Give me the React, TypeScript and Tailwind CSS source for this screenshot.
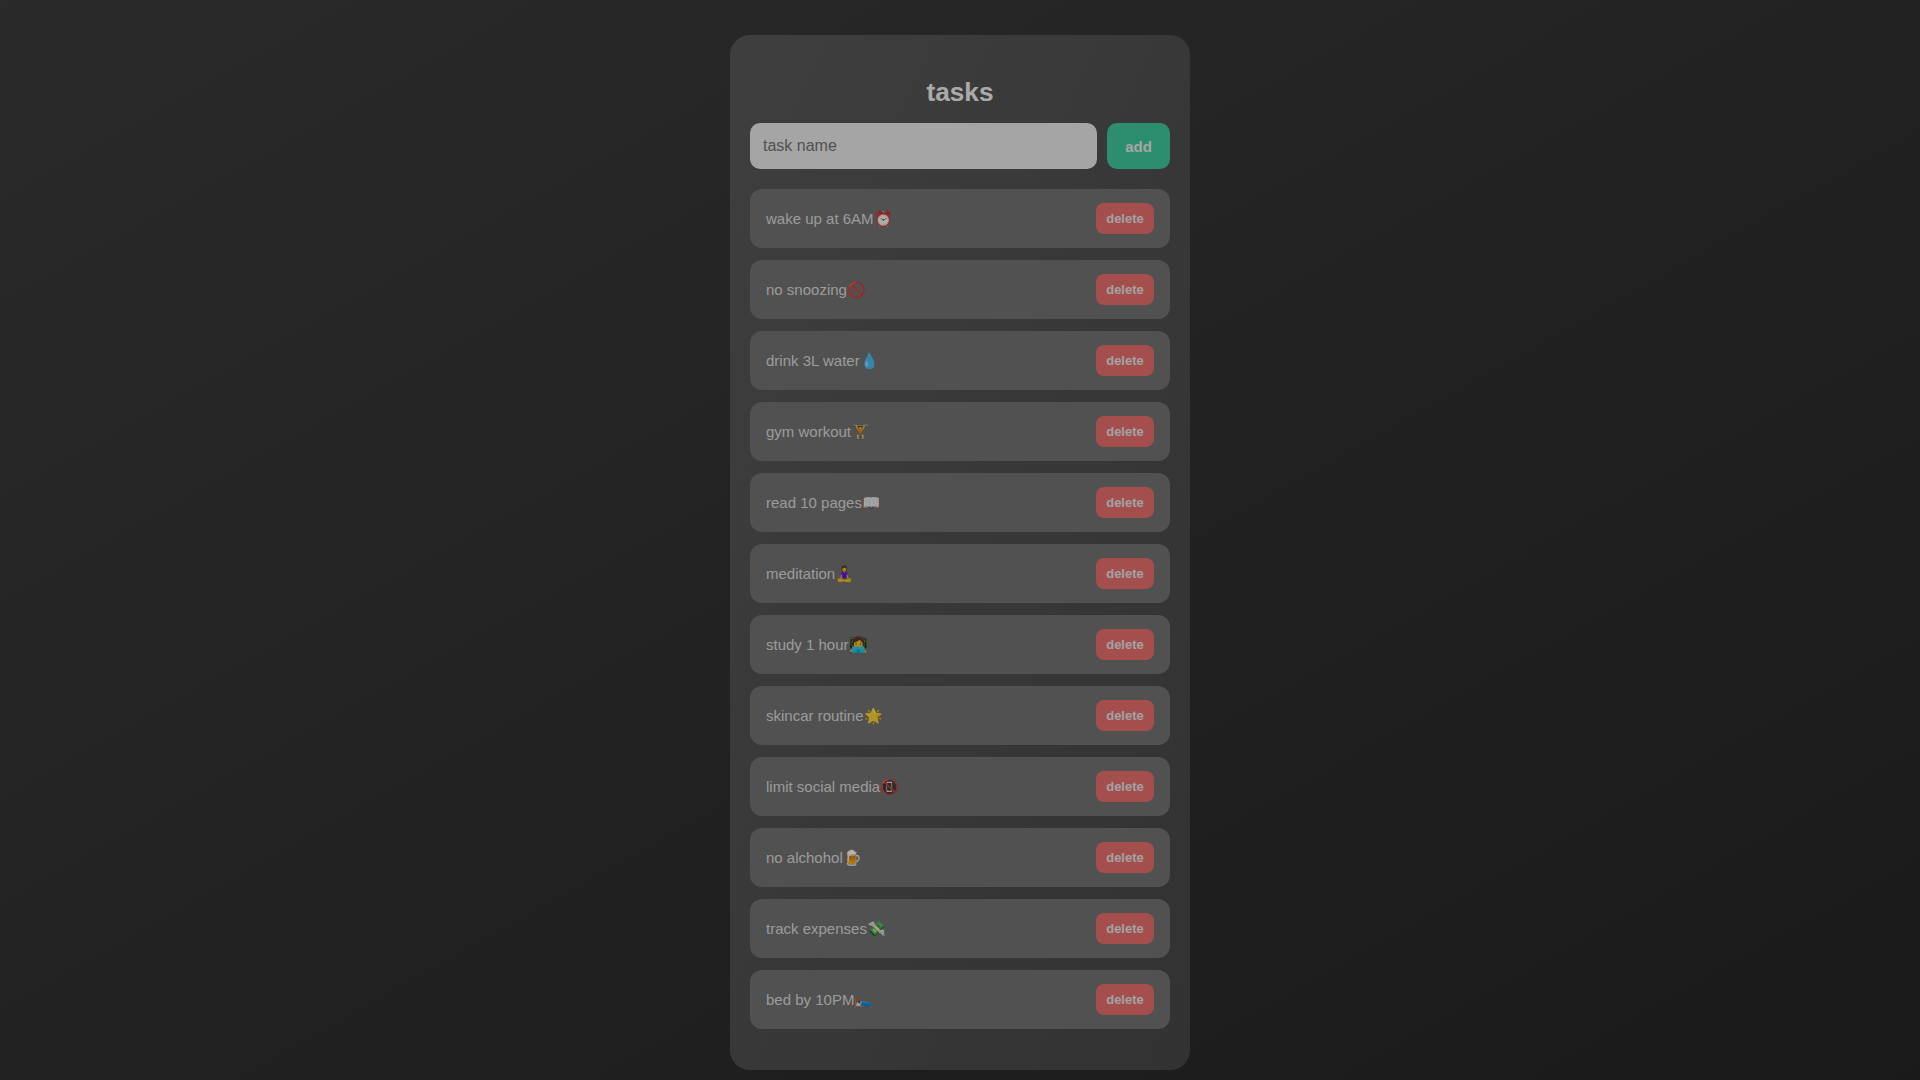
const TASKS = [
  "wake up at 6AM⏰",
  "no snoozing🚫",
  "drink 3L water💧",
  "gym workout🏋️",
  "read 10 pages📖",
  "meditation🧘‍♀️",
  "study 1 hour👩‍💻",
  "skincar routine🌟",
  "limit social media📵",
  "no alchohol🍺",
  "track expenses💸",
  "bed by 10PM🛌",
];

export default function App() {
  return (
    <div className="relative flex min-h-screen justify-center overflow-hidden bg-linear-to-br from-[#3d3d3d] to-[#262626] pt-[35px] font-['Liberation_Sans',Arial,sans-serif]">
      <main className="flex h-[1035px] w-[460px] flex-col rounded-[20px] bg-linear-to-br from-[#5a5a5a] to-[#484848] px-5 pt-[42px]">
        <h1 className="mb-4 text-center text-[26.2px] leading-[30px] font-bold text-[#f4f4f4]">
          tasks
        </h1>
        <div className="flex gap-[10px]">
          <input
            type="text"
            placeholder="task name"
            className="h-[46px] min-w-0 flex-1 rounded-[10px] bg-[#ededed] px-[13px] text-base text-black outline-none placeholder:text-[#757575]"
          />
          <button
            type="button"
            className="h-[46px] w-[63px] rounded-[10px] bg-[#40cca0] pt-[2px] text-[15px] font-bold text-[#ececec]"
          >
            add
          </button>
        </div>
        <ul className="mt-5 flex flex-col gap-3">
          {TASKS.map((task) => (
            <li
              key={task}
              className="flex h-[59px] items-center justify-between rounded-xl bg-[#757575] px-4 text-[15px] text-[#dedede]"
            >
              <span className="pt-px">{task}</span>
              <button
                type="button"
                className="h-[31px] w-[58px] rounded-lg bg-[#ec7070] text-[13px] font-bold text-[#e8e8e8]"
              >
                delete
              </button>
            </li>
          ))}
        </ul>
      </main>
      {/* dimmed look of the whole page */}
      <div className="pointer-events-none absolute inset-0 bg-black/30 backdrop-blur-[0.5px]" />
    </div>
  );
}
